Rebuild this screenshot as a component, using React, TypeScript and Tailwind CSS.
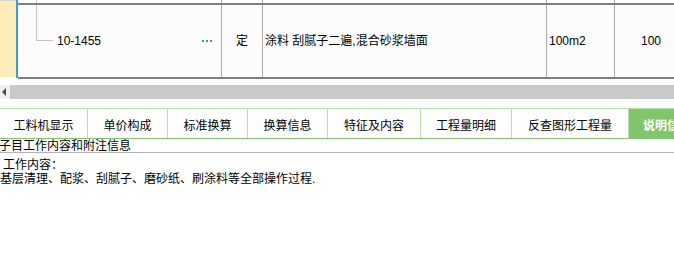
const tabs = [
  { label: "工料机显示", w: "w-[88px]" },
  { label: "单价构成", w: "w-[80px]" },
  { label: "标准换算", w: "w-[80px]" },
  { label: "换算信息", w: "w-[80px]" },
  { label: "特征及内容", w: "w-[93px]" },
  { label: "工程量明细", w: "w-[91px]" },
  { label: "反查图形工程量", w: "w-[117px]" },
];

/** One column layout shared by the clipped row above and the selected row. */
function Cols({
  children,
  className = "",
}: {
  children: React.ReactNode[];
  className?: string;
}) {
  return (
    <div className={`flex ${className}`}>
      <div className="flex w-[204px] shrink-0 border-r border-[#a9a9a9]">{children[0]}</div>
      <div className="flex w-[41px] shrink-0 border-r border-[#a9a9a9]">{children[1]}</div>
      <div className="flex w-[284px] shrink-0 border-r border-[#a9a9a9]">{children[2]}</div>
      <div className="flex w-[68px] shrink-0 border-r border-[#a9a9a9]">{children[3]}</div>
      <div className="flex w-[72px] shrink-0">{children[4]}</div>
    </div>
  );
}

export default function App() {
  return (
    <div className="h-[257px] w-[674px] overflow-hidden bg-white text-[12px] text-black [font-family:'Liberation_Sans','Noto_Sans_CJK_SC',sans-serif]">
      {/* grid row */}
      <div className="flex h-[79px]">
        <div className="h-[77px] w-[16px] shrink-0 border-t border-[#d6d6d6] bg-[#fdeeb9]" />
        <div className="h-[78px] w-[2px] shrink-0 bg-[#3a9ed2]" />
        <div className="flex min-w-0 flex-1 flex-col overflow-hidden">
          <Cols className="h-[3px]">
            {[
              <div key="a" className="ml-[18px] h-full w-px bg-[#c4c4c4]" />,
              <span key="b" />,
              <span key="c" />,
              <span key="d" />,
              <span key="e" />,
            ]}
          </Cols>
          <div className="h-[2px] bg-[#7f7f7f]" />
          <Cols className="h-[72px] bg-[#fcfcfc]">
            {[
              <div key="a" className="flex flex-1 items-start">
                <div className="ml-[18px] h-[36px] w-[17px] border-b border-l border-[#c4c4c4]" />
                <span className="ml-[4px] mt-[28px] leading-[16px]">10-1455</span>
                <div className="ml-auto mr-[9px] mt-[35px] flex gap-[2px]">
                  <span className="h-[2px] w-[2px] bg-[#3d8fd1]" />
                  <span className="h-[2px] w-[2px] bg-[#3d8fd1]" />
                  <span className="h-[2px] w-[2px] bg-[#3d8fd1]" />
                </div>
              </div>,
              <div key="b" className="flex flex-1 items-center justify-center">
                定
              </div>,
              <div key="c" className="flex flex-1 items-center pl-[2px] whitespace-nowrap">
                涂料 刮腻子二遍,混合砂浆墙面
              </div>,
              <div key="d" className="flex flex-1 items-center pl-[2px]">
                100m2
              </div>,
              <div key="e" className="flex flex-1 items-center justify-center">
                100
              </div>,
            ]}
          </Cols>
          <div className="h-[2px] bg-[#7f7f7f]" />
        </div>
      </div>

      {/* horizontal scrollbar */}
      <div className="mt-[6px] flex h-[14px]">
        <div className="flex w-[10px] items-center bg-[#f0f0f0] pl-[2px]">
          <span className="h-0 w-0 border-y-[4px] border-r-[4px] border-y-transparent border-r-[#4a4a4a]" />
        </div>
        <div className="flex-1 bg-[#c9c9c9]" />
      </div>

      {/* tab strip */}
      <div className="mt-[9px] flex h-[31px] border-y border-t-[#b5e3a5] border-b-[#82c56e]">
        {tabs.map((t) => (
          <div
            key={t.label}
            className={`${t.w} flex shrink-0 items-center justify-center border-r border-[#b5e3a5] pt-[4px] whitespace-nowrap`}
          >
            {t.label}
          </div>
        ))}
        <div className="flex w-[90px] shrink-0 items-center bg-[#80c46b] pl-[14px] pt-[4px] font-bold whitespace-nowrap text-white">
          说明信息
        </div>
      </div>

      {/* description panel */}
      <div className="-ml-px h-[14px] border-b border-[#b1b1b9] leading-[14px] whitespace-nowrap">
        子目工作内容和附注信息
      </div>
      <div className="pt-[5px] leading-[14px] whitespace-nowrap">
        <div className="pl-[3px]">工作内容：</div>
        <div>基层清理、配浆、刮腻子、磨砂纸、刷涂料等全部操作过程.</div>
      </div>
    </div>
  );
}
